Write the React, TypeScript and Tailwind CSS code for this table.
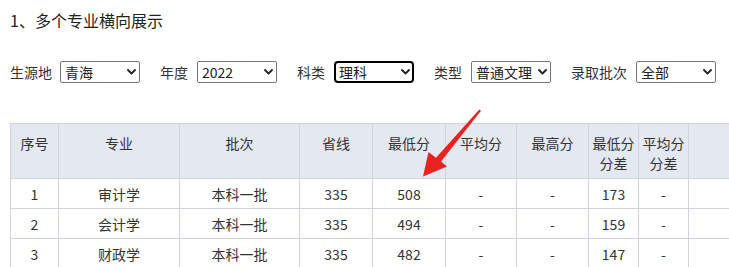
import React from "react";

const FONT = "font-['Noto_Sans_CJK_SC','Noto_Sans',sans-serif]";

function Chevron() {
  return (
    <svg
      className="pointer-events-none absolute right-[4px] top-[8px]"
      width="9"
      height="6"
      viewBox="0 0 9 6"
    >
      <path d="M1 1 L4.5 4.5 L8 1" fill="none" stroke="#222" strokeWidth="1.8" strokeLinecap="round" strokeLinejoin="round" />
    </svg>
  );
}

function Sel({ value, focused = false }: { value: string; focused?: boolean }) {
  return (
    <span className="relative inline-flex mr-[20px]">
      <select
        defaultValue={value}
        className={
          "appearance-none w-[80px] h-[22px] bg-white text-[14px] leading-[18px] text-[#222] outline-none " +
          FONT +
          (focused
            ? " border-2 border-black rounded-[4px] pl-[3px]"
            : " border border-[#767676] rounded-[2px] pl-[4px]")
        }
      >
        <option value={value}>{value}</option>
      </select>
      <Chevron />
    </span>
  );
}

const headers: React.ReactNode[] = [
  "序号",
  "专业",
  "批次",
  "省线",
  "最低分",
  "平均分",
  "最高分",
  <>
    最低分
    <br />
    分差
  </>,
  <>
    平均分
    <br />
    分差
  </>,
  "",
];

const widths = [48, 121, 120, 73, 73, 71, 72, 50, 50, 120];

const rows = [
  ["1", "审计学", "本科一批", "335", "508", "-", "-", "173", "-", ""],
  ["2", "会计学", "本科一批", "335", "494", "-", "-", "159", "-", ""],
  ["3", "财政学", "本科一批", "335", "482", "-", "-", "147", "-", ""],
];

export default function App() {
  return (
    <div className={"relative w-[729px] h-[267px] overflow-hidden bg-white text-[#333] pl-[10px] " + FONT}>
      <div className="pt-[9px] text-[16px] leading-[22px] text-[#222]">1、多个专业横向展示</div>

      <div className="mt-[30px] flex items-center h-[22px] text-[14px] text-[#333] whitespace-nowrap">
        <span className="mr-[8px] leading-[22px]">生源地</span>
        <Sel value="青海" />
        <span className="mr-[9px] leading-[22px]">年度</span>
        <Sel value="2022" />
        <span className="mr-[9px] leading-[22px]">科类</span>
        <Sel value="理科" focused />
        <span className="mr-[9px] leading-[22px]">类型</span>
        <Sel value="普通文理" />
        <span className="mr-[9px] leading-[22px]">录取批次</span>
        <Sel value="全部" />
      </div>

      <div className="mt-[40px] w-[798px]">
        <table className="table-fixed border-collapse w-full text-[14px]">
          <colgroup>
            {widths.map((w, i) => (
              <col key={i} style={{ width: w }} />
            ))}
          </colgroup>
          <thead>
            <tr className="h-[55px] bg-[#e3e8f1]">
              {headers.map((h, i) => (
                <th
                  key={i}
                  className={
                    "border border-[#d0d4dc] align-top pt-[9px] px-0 font-normal leading-[20px] text-[#333]" +
                    (i === headers.length - 1 ? " border-r-0" : "")
                  }
                >
                  {h}
                </th>
              ))}
            </tr>
          </thead>
          <tbody>
            {rows.map((r, ri) => (
              <tr key={ri} className="h-[30px]">
                {r.map((c, ci) => (
                  <td
                    key={ci}
                    className={
                      "border border-[#d0d4dc] text-center align-middle leading-[20px] p-0 text-[#333]" +
                      (ci === r.length - 1 ? " border-r-0" : "")
                    }
                  >
                    {c}
                  </td>
                ))}
              </tr>
            ))}
          </tbody>
        </table>
      </div>

      <svg
        className="pointer-events-none absolute left-0 top-0"
        width="729"
        height="267"
        viewBox="0 0 729 267"
      >
        <polygon
          points="479.3,109.4 481,110.8 441,161.5 447,166.5 423,176.5 428.5,152 436,157.7"
          fill="#e8231f"
        />
      </svg>
    </div>
  );
}
